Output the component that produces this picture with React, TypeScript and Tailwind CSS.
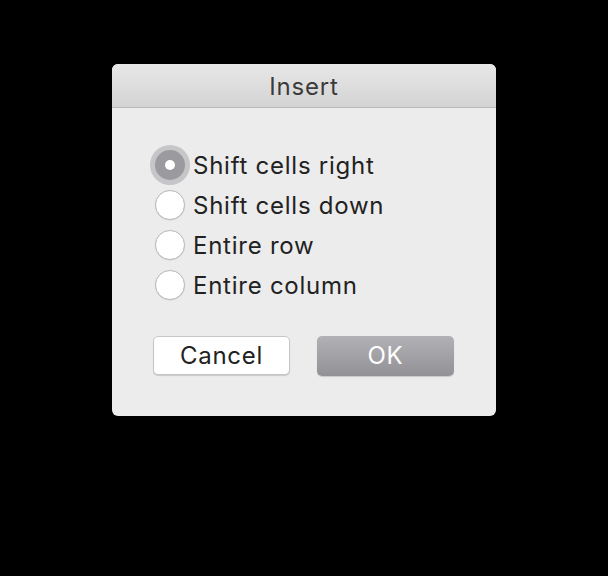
import { useState } from "react";

const options = ["Shift cells right", "Shift cells down", "Entire row", "Entire column"];

function Radio({ checked }: { checked: boolean }) {
  if (checked) {
    return (
      <div className="w-[30px] h-[30px] shrink-0 rounded-full bg-[#9b9a9e] ring-[5px] ring-[#c6c5c8] flex items-center justify-center">
        <div className="w-[10px] h-[10px] rounded-full bg-white" />
      </div>
    );
  }
  return (
    <div className="w-[30px] h-[30px] shrink-0 rounded-full bg-white border border-[#b9b9b9] shadow-[0_0.5px_1px_rgba(0,0,0,0.12)]" />
  );
}

export default function App() {
  const [selected, setSelected] = useState(0);

  return (
    <div
      className="w-[608px] h-[576px] bg-black pt-[64px] pl-[112px]"
      style={{ fontFamily: "Inter, 'Noto Sans', sans-serif" }}
    >
      <div className="w-[384px] h-[352px] rounded-[6px] bg-[#ececec] overflow-hidden flex flex-col">
        {/* Title bar */}
        <div className="h-[44px] shrink-0 bg-gradient-to-b from-[#e9e8e9] to-[#d4d3d4] border-b border-[#b8b8b8] flex items-center justify-center">
          <span className="text-[24px] text-[#3b3b3b] tracking-[0.8px] pt-[2px]">Insert</span>
        </div>

        {/* Options */}
        <div className="pl-[43px] pt-[37px] flex flex-col">
          {options.map((label, i) => (
            <button
              key={label}
              onClick={() => setSelected(i)}
              className="h-[40px] flex items-center gap-[8px] text-left"
            >
              <Radio checked={selected === i} />
              <span className="text-[24px] text-[#222222] leading-none tracking-[0.75px] pt-[2px]">{label}</span>
            </button>
          ))}
        </div>

        {/* Buttons */}
        <div className="pl-[41px] pt-[31px] flex gap-[27px]">
          <button className="w-[137px] h-[39px] rounded-[5px] bg-white border border-[#c6c6c6] shadow-[0_1px_1px_rgba(0,0,0,0.15)] text-[24px] tracking-[0.7px] text-[#222222]">
            Cancel
          </button>
          <button className="w-[137px] h-[40px] rounded-[5px] bg-gradient-to-b from-[#b2b1b5] to-[#929195] shadow-[0_1px_1px_rgba(0,0,0,0.15)] text-[24px] tracking-[0.7px] text-white">
            OK
          </button>
        </div>
      </div>
    </div>
  );
}
